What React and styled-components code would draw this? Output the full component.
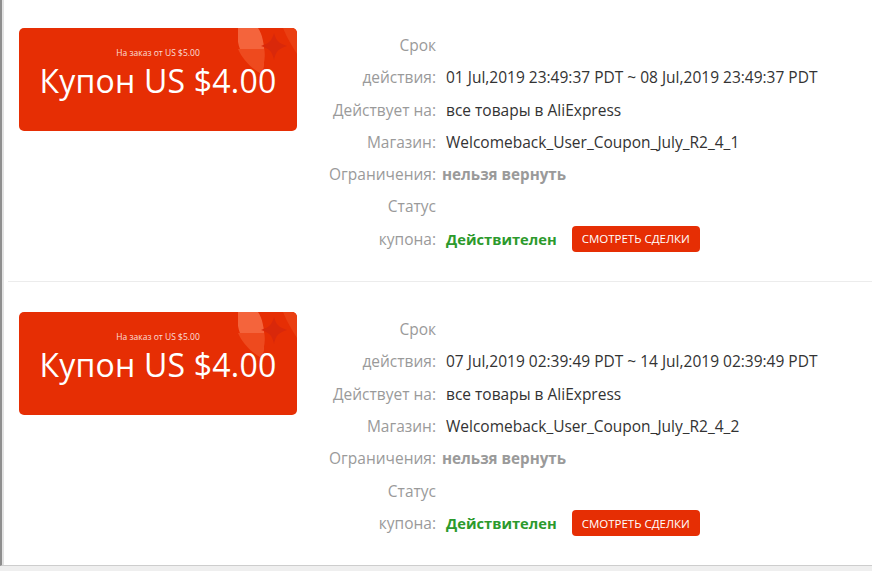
import React from 'react'
import styled, { createGlobalStyle } from 'styled-components'

const GlobalStyle = createGlobalStyle`
  html, body {
    margin: 0;
    background: #efefef;
  }
  body {
    font-family: "Open Sans", "Noto Sans", sans-serif;
  }
`

const Page = styled.div`
  background: #fff;
  border-left: 2px solid #8e8e8e;
  border-bottom: 1px solid #cdcdcd;
  height: 566px;
  box-sizing: border-box;
`

const Inner = styled.div`
  height: 100%;
  border-left: 2px solid #e2e2e2;
  padding-left: 4px;
`

const Block = styled.div`
  display: flex;
  align-items: flex-start;
  padding: 30px 0 26px;
  border-bottom: 1px solid #ececec;

  &:first-child {
    padding-top: 28px;
  }

  &:last-child {
    border-bottom: none;
  }
`

const Card = styled.div`
  position: relative;
  overflow: hidden;
  flex: none;
  width: 278px;
  height: 103px;
  margin-left: 11px;
  border-radius: 5px;
  background: #e62e04;
  color: #fff;
  display: flex;
  flex-direction: column;
  align-items: center;
  padding-top: 19px;
  box-sizing: border-box;
`

const Condition = styled.div`
  position: relative;
  font-size: 8.5px;
  line-height: 12px;
  color: rgba(255, 255, 255, 0.85);
`

const Amount = styled.div`
  position: relative;
  font-size: 32px;
  line-height: 44px;
  letter-spacing: 0.2px;
`

const Deco = styled.svg`
  position: absolute;
  top: 0;
  right: 0;
`

const Details = styled.div`
  margin-top: 1px;
  margin-left: 13px;
  display: grid;
  grid-template-columns: 126px auto;
  column-gap: 10px;
  align-items: end;
  font-size: 15.5px;
  line-height: 32.3px;
`

const Label = styled.div`
  color: #9a9a9a;
  text-align: right;
  white-space: nowrap;
`

const Value = styled.div`
  color: ${p => (p.$muted ? '#9a9a9a' : '#333')};
  font-weight: ${p => (p.$bold ? 700 : 400)};
  font-size: ${p => (p.$bold ? '15.2px' : 'inherit')};
  margin-left: ${p => (p.$bold ? '-4px' : '0')};
  white-space: nowrap;
  display: flex;
  align-items: center;
`

const Status = styled.span`
  color: #2c9a2c;
  font-weight: 700;
  font-size: 14.7px;
`

const DealsButton = styled.button`
  margin-left: 15px;
  height: 26px;
  padding: 0 10px;
  border: none;
  border-radius: 4px;
  background: #e62e04;
  color: #fff;
  font-family: "Open Sans", sans-serif;
  font-size: 11.5px;
  text-transform: uppercase;
  cursor: pointer;
`

const CardDeco = () => (
  <Deco width="60" height="50" viewBox="0 0 60 50">
    <path d="M1 0 H21 C28 10 29 30 25 46 C12 38 3 26 1 14 Z" fill="#f4643c" />
    <path d="M1 21 C5 30 13 40 25 46 C27 38 28 30 27 21 Z" fill="#ee4a1e" />
    <path d="M46 0 H56 C59 0 60 2 60 5 V26 C55 18 50 10 46 0 Z" fill="#ea3f12" />
    <path d="M37 5 C39 12 41 15 50 18 C41 21 39 23 37 32 C35 23 33 21 24 18 C33 15 35 12 37 5 Z" fill="#d9280a" />
  </Deco>
)

const coupons = [
  {
    from: '01 Jul,2019 23:49:37 PDT',
    to: '08 Jul,2019 23:49:37 PDT',
    store: 'Welcomeback_User_Coupon_July_R2_4_1',
  },
  {
    from: '07 Jul,2019 02:39:49 PDT',
    to: '14 Jul,2019 02:39:49 PDT',
    store: 'Welcomeback_User_Coupon_July_R2_4_2',
  },
]

const CouponRow = ({ coupon }) => (
  <Block>
    <Card>
      <CardDeco />
      <Condition>На заказ от US $5.00</Condition>
      <Amount>Купон US $4.00</Amount>
    </Card>
    <Details>
      <Label>Срок<br />действия:</Label>
      <Value>{coupon.from} ~ {coupon.to}</Value>
      <Label>Действует на:</Label>
      <Value>все товары в AliExpress</Value>
      <Label>Магазин:</Label>
      <Value>{coupon.store}</Value>
      <Label>Ограничения:</Label>
      <Value $muted $bold>нельзя вернуть</Value>
      <Label>Статус<br />купона:</Label>
      <Value>
        <Status>Действителен</Status>
        <DealsButton>Смотреть сделки</DealsButton>
      </Value>
    </Details>
  </Block>
)

const App = () => (
  <>
    <GlobalStyle />
    <Page>
      <Inner>
        {coupons.map(c => (
          <CouponRow key={c.store} coupon={c} />
        ))}
      </Inner>
    </Page>
  </>
)

export default App
